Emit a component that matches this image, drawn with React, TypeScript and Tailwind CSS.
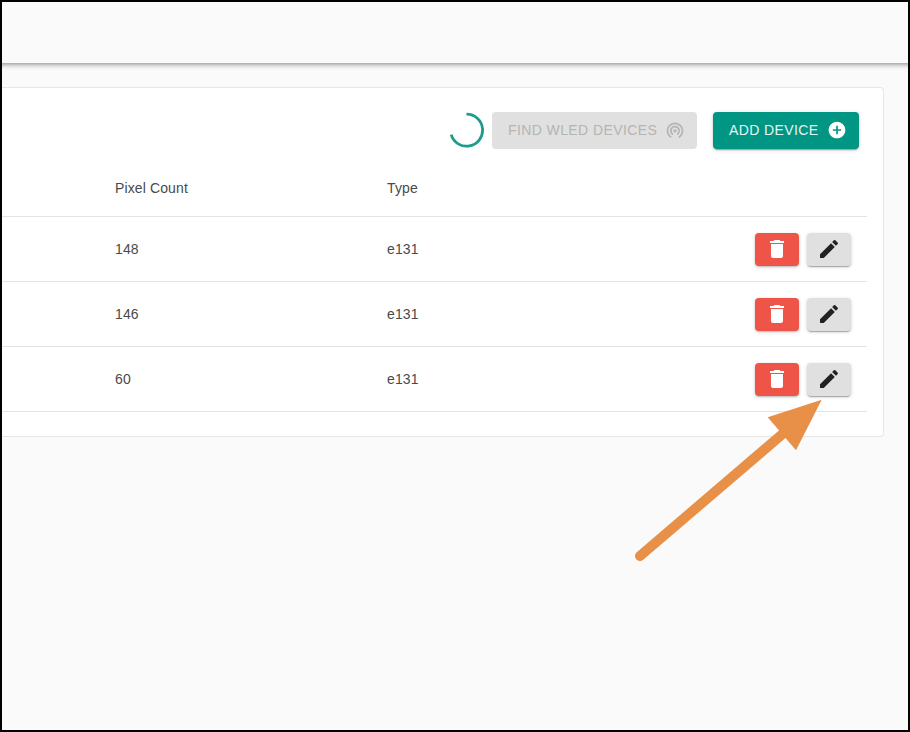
import React from "react";
import {
  MdAddCircle,
  MdDelete,
  MdEdit,
  MdWifiTethering,
} from "react-icons/md";

const devices = [
  { id: 1, pixelCount: 148, type: "e131" },
  { id: 2, pixelCount: 146, type: "e131" },
  { id: 3, pixelCount: 60, type: "e131" },
];

const Spinner = () => (
  <svg className="mb-px mr-[7px] h-9 w-9" viewBox="0 0 36 36" fill="none">
    <path
      d="M17.5 2.2A16 16 0 1 1 2.2 22.6"
      stroke="#1f9c88"
      strokeWidth="2.8"
    />
  </svg>
);

const DeviceRow = ({ pixelCount, type }: { pixelCount: number; type: string }) => (
  <div className="flex h-[65px] items-center border-b border-[#e3e3e3] pr-4">
    <div className="w-[272px]">{pixelCount}</div>
    <div className="flex-1">{type}</div>
    <button className="mr-2 flex h-[33px] w-11 items-center justify-center rounded bg-[#ee5548] text-white shadow-[0_2px_1px_-2px_rgba(0,0,0,.2),0_1px_2px_rgba(0,0,0,.18),0_1px_4px_rgba(0,0,0,.12)]">
      <MdDelete size={24} />
    </button>
    <button className="flex h-[33px] w-11 items-center justify-center rounded bg-[#e0e0e0] text-[#222] shadow-[0_2px_1px_-1px_rgba(0,0,0,.2),0_1px_2px_rgba(0,0,0,.14),0_1px_4px_rgba(0,0,0,.12)]">
      <MdEdit size={24} />
    </button>
  </div>
);

export default function App() {
  return (
    <div className="h-[732px] w-[910px] overflow-hidden border-2 border-black bg-[#fafafa] font-['Liberation_Sans',Arial,sans-serif] text-sm tracking-[.12px] text-[#4a4a4a] relative">
      <header className="-mx-3 h-[61px] shadow-[0_2px_4px_-1px_rgba(0,0,0,.25),0_2px_5px_rgba(0,0,0,.16),0_1px_8px_rgba(0,0,0,.08)]" />

      <main className="mt-6 h-[350px] w-[882px] rounded-r border border-l-0 border-[#e6e6e6] bg-white pr-4 pt-6">
        <div className="flex h-[37px] items-center justify-end pr-2">
          <Spinner />
          <button
            disabled
            className="mr-4 flex h-[37px] w-[205px] items-center justify-between whitespace-nowrap rounded bg-[#e0e0e0] pb-0.5 pl-4 pr-3 tracking-[.4px] text-[#b4b4b4]"
          >
            FIND WLED DEVICES
            <MdWifiTethering size={20} />
          </button>
          <button className="flex h-[37px] w-[146px] items-center justify-between whitespace-nowrap rounded bg-[#019684] pb-0.5 pl-4 pr-3 tracking-[.4px] text-[#e4f5f2] shadow-[0_3px_1px_-2px_rgba(0,0,0,.2),0_1px_2px_rgba(0,0,0,.2),0_1px_5px_rgba(0,0,0,.12)]">
            ADD DEVICE
            <MdAddCircle size={20} className="text-white" />
          </button>
        </div>

        {/* Device table */}
        <div className="[&>div]:pl-[113px]">
          <div className="flex h-[68px] items-center border-b border-[#e3e3e3] pt-[11px]">
            <div className="w-[272px]">Pixel Count</div>
            <div>Type</div>
          </div>
          {devices.map((device) => (
            <DeviceRow
              key={device.id}
              pixelCount={device.pixelCount}
              type={device.type}
            />
          ))}
        </div>
      </main>

      {/* Arrow pointing at the last edit button */}
      <svg
        className="pointer-events-none absolute left-[628px] top-[393px] h-[175px] w-[200px]"
        viewBox="630 395 200 175"
      >
        <path
          d="M640 556L786 431"
          stroke="#e89048"
          strokeWidth="10"
          strokeLinecap="round"
        />
        <path d="M821.7 399.7L767.7 417.3L796 450.3Z" fill="#e89048" />
      </svg>
    </div>
  );
}
